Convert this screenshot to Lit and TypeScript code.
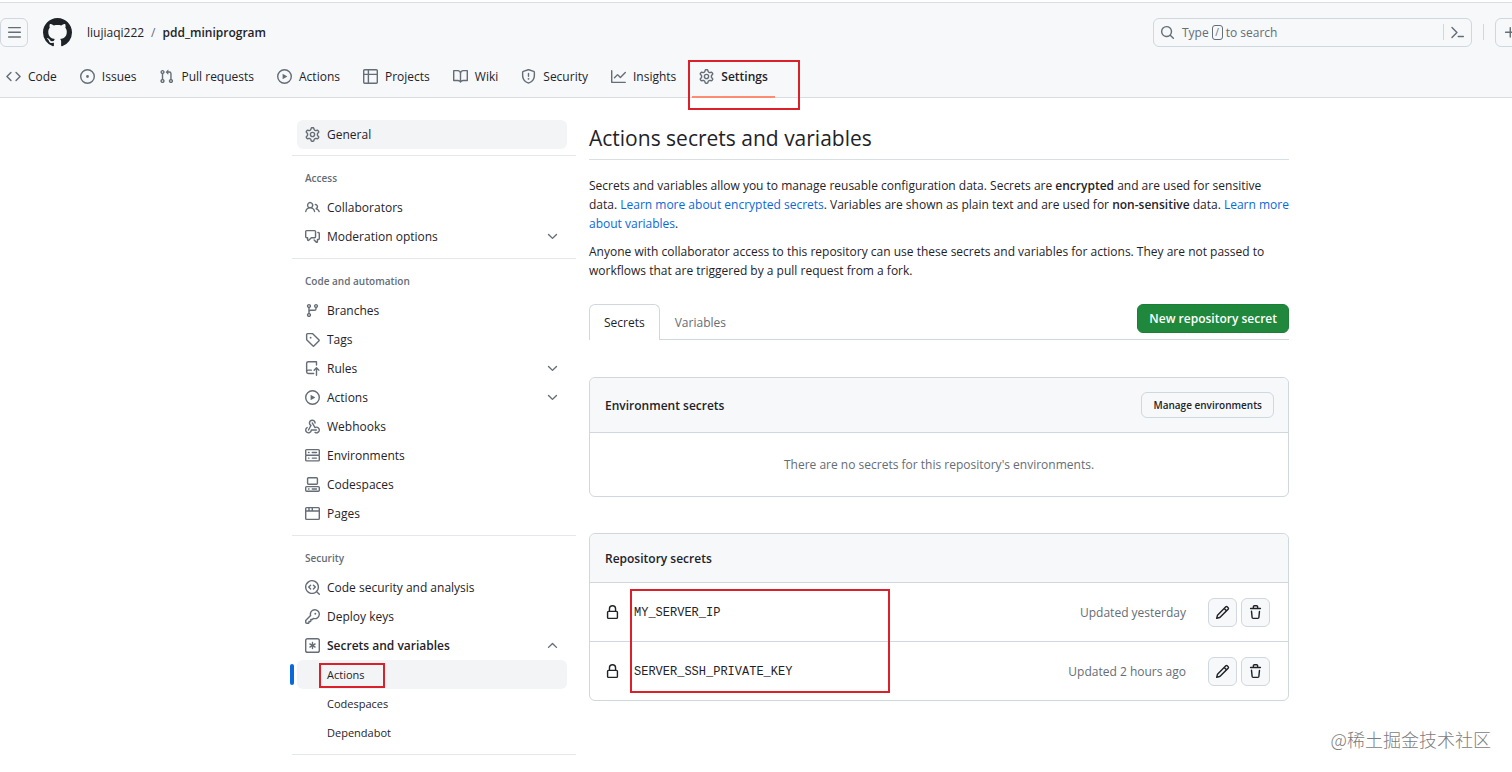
import { LitElement, html, css, svg, nothing } from "lit";
import { customElement, property } from "lit/decorators.js";
import { classMap } from "lit/directives/class-map.js";

const ICONS: Record<string, string> = {
  menu: "M1 2.75A.75.75 0 0 1 1.75 2h12.5a.75.75 0 0 1 0 1.5H1.75A.75.75 0 0 1 1 2.75Zm0 5A.75.75 0 0 1 1.75 7h12.5a.75.75 0 0 1 0 1.5H1.75A.75.75 0 0 1 1 7.75ZM1.75 12h12.5a.75.75 0 0 1 0 1.5H1.75a.75.75 0 0 1 0-1.5Z",
  github: "M8 0c4.42 0 8 3.58 8 8a8.013 8.013 0 0 1-5.45 7.59c-.4.08-.55-.17-.55-.38 0-.27.01-1.13.01-2.2 0-.75-.25-1.23-.54-1.48 1.78-.2 3.65-.88 3.65-3.95 0-.88-.31-1.59-.82-2.15.08-.2.36-1.02-.08-2.12 0 0-.67-.22-2.2.82-.64-.18-1.32-.27-2-.27-.68 0-1.36.09-2 .27-1.53-1.03-2.2-.82-2.2-.82-.44 1.1-.16 1.92-.08 2.12-.51.56-.82 1.28-.82 2.15 0 3.06 1.86 3.75 3.64 3.95-.23.2-.44.55-.51 1.07-.46.21-1.61.55-2.33-.66-.15-.24-.6-.83-1.23-.82-.67.01-.27.38.01.53.34.19.73.9.82 1.13.16.45.68 1.31 2.69.94 0 .67.01 1.3.01 1.49 0 .21-.15.45-.55.38A7.995 7.995 0 0 1 0 8c0-4.42 3.58-8 8-8Z",
  code: "m11.28 3.22 4.25 4.25a.75.75 0 0 1 0 1.06l-4.25 4.25a.749.749 0 0 1-1.275-.326.749.749 0 0 1 .215-.734L13.94 8l-3.72-3.72a.749.749 0 0 1 .326-1.275.749.749 0 0 1 .734.215Zm-6.56 0a.751.751 0 0 1 1.042.018.751.751 0 0 1 .018 1.042L2.06 8l3.72 3.72a.749.749 0 0 1-.326 1.275.749.749 0 0 1-.734-.215L.47 8.53a.75.75 0 0 1 0-1.06Z",
  issue: "M8 9.5a1.5 1.5 0 1 0 0-3 1.5 1.5 0 0 0 0 3ZM8 0a8 8 0 1 1 0 16A8 8 0 0 1 8 0ZM1.5 8a6.5 6.5 0 1 0 13 0 6.5 6.5 0 0 0-13 0Z",
  pull: "M1.5 3.25a2.25 2.25 0 1 1 3 2.122v5.256a2.251 2.251 0 1 1-1.5 0V5.372A2.25 2.25 0 0 1 1.5 3.25Zm5.677-.177L9.573.677A.25.25 0 0 1 10 .854V2.5h1A2.5 2.5 0 0 1 13.5 5v5.628a2.251 2.251 0 1 1-1.5 0V5a1 1 0 0 0-1-1h-1v1.646a.25.25 0 0 1-.427.177L7.177 3.427a.25.25 0 0 1 0-.354ZM3.75 2.5a.75.75 0 1 0 0 1.5.75.75 0 0 0 0-1.5Zm0 9.5a.75.75 0 1 0 0 1.5.75.75 0 0 0 0-1.5Zm8.25.75a.75.75 0 1 0 1.5 0 .75.75 0 0 0-1.5 0Z",
  play: "M8 0a8 8 0 1 1 0 16A8 8 0 0 1 8 0ZM1.5 8a6.5 6.5 0 1 0 13 0 6.5 6.5 0 0 0-13 0Zm4.879-2.773 4.264 2.559a.25.25 0 0 1 0 .428l-4.264 2.559A.25.25 0 0 1 6 10.559V5.442a.25.25 0 0 1 .379-.215Z",
  table: "M0 1.75C0 .784.784 0 1.75 0h12.5C15.216 0 16 .784 16 1.75v12.5A1.75 1.75 0 0 1 14.25 16H1.75A1.75 1.75 0 0 1 0 14.25ZM6.5 6.5v8h7.75a.25.25 0 0 0 .25-.25V6.5Zm8-1.5V1.75a.25.25 0 0 0-.25-.25H6.5V5Zm-13 1.5v7.75c0 .138.112.25.25.25H5v-8ZM5 5V1.5H1.75a.25.25 0 0 0-.25.25V5Z",
  book: "M0 1.75A.75.75 0 0 1 .75 1h4.253c1.227 0 2.317.59 3 1.501A3.743 3.743 0 0 1 11.006 1h4.245a.75.75 0 0 1 .75.75v10.5a.75.75 0 0 1-.75.75h-4.507a2.25 2.25 0 0 0-1.591.659l-.622.621a.75.75 0 0 1-1.06 0l-.622-.621A2.25 2.25 0 0 0 5.258 13H.75a.75.75 0 0 1-.75-.75Zm7.251 10.324.004-5.073-.002-2.253A2.25 2.25 0 0 0 5.003 2.5H1.5v9h3.757a3.75 3.75 0 0 1 1.994.574ZM8.755 4.75l-.004 7.322a3.752 3.752 0 0 1 1.992-.572H14.5v-9h-3.495a2.25 2.25 0 0 0-2.25 2.25Z",
  shield: "M8.533.133a1.75 1.75 0 0 0-1.066 0l-5.25 1.68A1.75 1.75 0 0 0 1 3.48V7c0 1.566.32 3.182 1.303 4.682.983 1.498 2.585 2.813 5.032 3.855a1.697 1.697 0 0 0 1.33 0c2.447-1.042 4.049-2.357 5.032-3.855C14.68 10.182 15 8.566 15 7V3.48a1.75 1.75 0 0 0-1.217-1.667Zm-.61 1.429a.25.25 0 0 1 .153 0l5.25 1.68a.25.25 0 0 1 .174.238V7c0 1.358-.275 2.666-1.057 3.86-.784 1.194-2.121 2.34-4.366 3.297a.196.196 0 0 1-.154 0c-2.245-.956-3.582-2.104-4.366-3.298C2.775 9.666 2.5 8.36 2.5 7V3.48a.25.25 0 0 1 .174-.237ZM8.75 4.75a.75.75 0 0 0-1.5 0v3a.75.75 0 0 0 1.5 0ZM9 10.5a1 1 0 1 1-2 0 1 1 0 0 1 2 0Z",
  graph: "M1.5 1.75V13.5h13.75a.75.75 0 0 1 0 1.5H.75a.75.75 0 0 1-.75-.75V1.75a.75.75 0 0 1 1.5 0Zm14.28 2.53-5.25 5.25a.75.75 0 0 1-1.06 0L7 7.06 4.28 9.78a.751.751 0 0 1-1.042-.018.751.751 0 0 1-.018-1.042l3.25-3.25a.75.75 0 0 1 1.06 0L10 7.94l4.72-4.72a.751.751 0 0 1 1.042.018.751.751 0 0 1 .018 1.042Z",
  gear: "M8 0a8.2 8.2 0 0 1 .701.031C9.444.095 9.99.645 10.16 1.29l.288 1.107c.018.066.079.158.212.224.231.114.454.243.668.386.123.082.233.09.299.071l1.103-.303c.644-.176 1.392.021 1.82.63.27.385.506.792.704 1.218.315.675.111 1.422-.364 1.891l-.814.806c-.049.048-.098.147-.088.294.016.257.016.515 0 .772-.01.147.038.246.088.294l.814.806c.475.469.679 1.216.364 1.891a7.977 7.977 0 0 1-.704 1.217c-.428.61-1.176.807-1.82.63l-1.102-.302c-.067-.019-.177-.011-.3.071a5.909 5.909 0 0 1-.668.386c-.133.066-.194.158-.211.224l-.29 1.106c-.168.646-.715 1.196-1.458 1.26a8.006 8.006 0 0 1-1.402 0c-.743-.064-1.289-.614-1.458-1.26l-.289-1.106c-.018-.066-.079-.158-.212-.224a5.738 5.738 0 0 1-.668-.386c-.123-.082-.233-.09-.299-.071l-1.103.303c-.644.176-1.392-.021-1.82-.63a8.12 8.12 0 0 1-.704-1.218c-.315-.675-.111-1.422.363-1.891l.815-.806c.05-.048.098-.147.088-.294a6.214 6.214 0 0 1 0-.772c.01-.147-.038-.246-.088-.294l-.815-.806C.635 6.045.431 5.298.746 4.623a7.92 7.92 0 0 1 .704-1.217c.428-.61 1.176-.807 1.82-.63l1.102.302c.067.019.177.011.3-.071.214-.143.437-.272.668-.386.133-.066.194-.158.211-.224l.29-1.106C6.009.645 6.556.095 7.299.03 7.53.01 7.764 0 8 0Zm-.571 1.525c-.036.003-.108.036-.137.146l-.289 1.105c-.147.561-.549.967-.998 1.189-.173.086-.34.183-.5.29-.417.278-.97.423-1.529.27l-1.103-.303c-.109-.03-.175.016-.195.045-.22.312-.412.644-.573.99-.014.031-.021.11.059.19l.815.806c.411.406.562.957.53 1.456a4.709 4.709 0 0 0 0 .582c.032.499-.119 1.05-.53 1.456l-.815.806c-.081.08-.073.159-.059.19.162.346.353.677.573.989.02.03.085.076.195.046l1.102-.303c.56-.153 1.113-.008 1.53.27.161.107.328.204.501.29.447.222.85.629.997 1.189l.289 1.105c.029.109.101.143.137.146a6.6 6.6 0 0 0 1.142 0c.036-.003.108-.036.137-.146l.289-1.105c.147-.561.549-.967.998-1.189.173-.086.34-.183.5-.29.417-.278.97-.423 1.529-.27l1.103.303c.109.029.175-.016.195-.045.22-.313.411-.644.573-.99.014-.031.021-.11-.059-.19l-.815-.806c-.411-.406-.562-.957-.53-1.456a4.709 4.709 0 0 0 0-.582c-.032-.499.119-1.05.53-1.456l.815-.806c.081-.08.073-.159.059-.19a6.464 6.464 0 0 0-.573-.989c-.02-.03-.085-.076-.195-.046l-1.102.303c-.56.153-1.113.008-1.53-.27a4.44 4.44 0 0 0-.501-.29c-.447-.222-.85-.629-.997-1.189l-.289-1.105c-.029-.11-.101-.143-.137-.146a6.6 6.6 0 0 0-1.142 0ZM11 8a3 3 0 1 1-6 0 3 3 0 0 1 6 0ZM9.5 8a1.5 1.5 0 1 0-3.001.001A1.5 1.5 0 0 0 9.5 8Z",
  search: "M10.68 11.74a6 6 0 0 1-7.922-8.982 6 6 0 0 1 8.982 7.922l3.04 3.04a.749.749 0 0 1-.326 1.275.749.749 0 0 1-.734-.215ZM11.5 7a4.499 4.499 0 1 0-8.997 0A4.499 4.499 0 0 0 11.5 7Z",
  people: "M2 5.5a3.5 3.5 0 1 1 5.898 2.549 5.508 5.508 0 0 1 3.034 4.084.75.75 0 1 1-1.482.235 4 4 0 0 0-7.9 0 .75.75 0 0 1-1.482-.236A5.507 5.507 0 0 1 3.102 8.05 3.493 3.493 0 0 1 2 5.5ZM11 4a3.001 3.001 0 0 1 2.22 5.018 5.01 5.01 0 0 1 2.56 3.012.749.749 0 0 1-.885.954.752.752 0 0 1-.549-.514 3.507 3.507 0 0 0-2.522-2.372.75.75 0 0 1-.574-.73v-.352a.75.75 0 0 1 .416-.672A1.5 1.5 0 0 0 11 5.5.75.75 0 0 1 11 4Zm-5.5-.5a2 2 0 1 0-.001 3.999A2 2 0 0 0 5.5 3.5Z",
  discussion: "M1.75 1h8.5c.966 0 1.75.784 1.75 1.75v5.5A1.75 1.75 0 0 1 10.25 10H7.061l-2.574 2.573A1.458 1.458 0 0 1 2 11.543V10h-.25A1.75 1.75 0 0 1 0 8.25v-5.5C0 1.784.784 1 1.75 1ZM1.5 2.75v5.5c0 .138.112.25.25.25h1a.75.75 0 0 1 .75.75v2.19l2.72-2.72a.749.749 0 0 1 .53-.22h3.5a.25.25 0 0 0 .25-.25v-5.5a.25.25 0 0 0-.25-.25h-8.5a.25.25 0 0 0-.25.25Zm13 2a.25.25 0 0 0-.25-.25h-.5a.75.75 0 0 1 0-1.5h.5c.966 0 1.75.784 1.75 1.75v5.5A1.75 1.75 0 0 1 14.25 12H14v1.543a1.458 1.458 0 0 1-2.487 1.03L9.22 12.28a.749.749 0 0 1 .326-1.275.749.749 0 0 1 .734.215l2.22 2.22v-2.19a.75.75 0 0 1 .75-.75h1a.25.25 0 0 0 .25-.25Z",
  down: "M12.78 5.22a.749.749 0 0 1 0 1.06l-4.25 4.25a.749.749 0 0 1-1.06 0L3.22 6.28a.749.749 0 1 1 1.06-1.06L8 8.939l3.72-3.719a.749.749 0 0 1 1.06 0Z",
  up: "M3.22 10.53a.749.749 0 0 1 0-1.06l4.25-4.25a.749.749 0 0 1 1.06 0l4.25 4.25a.749.749 0 1 1-1.06 1.06L8 6.811 4.28 10.53a.749.749 0 0 1-1.06 0Z",
  branch: "M9.5 3.25a2.25 2.25 0 1 1 3 2.122V6A2.5 2.5 0 0 1 10 8.5H6a1 1 0 0 0-1 1v1.128a2.251 2.251 0 1 1-1.5 0V5.372a2.25 2.25 0 1 1 1.5 0v1.836A2.493 2.493 0 0 1 6 7h4a1 1 0 0 0 1-1v-.628A2.25 2.25 0 0 1 9.5 3.25Zm-6 0a.75.75 0 1 0 1.5 0 .75.75 0 0 0-1.5 0Zm8.25-.75a.75.75 0 1 0 0 1.5.75.75 0 0 0 0-1.5ZM4.25 12a.75.75 0 1 0 0 1.5.75.75 0 0 0 0-1.5Z",
  tag: "M1 7.775V2.75C1 1.784 1.784 1 2.75 1h5.025c.464 0 .91.184 1.238.513l6.25 6.25a1.75 1.75 0 0 1 0 2.474l-5.026 5.026a1.75 1.75 0 0 1-2.474 0l-6.25-6.25A1.752 1.752 0 0 1 1 7.775Zm1.5 0c0 .066.026.13.073.177l6.25 6.25a.25.25 0 0 0 .354 0l5.025-5.025a.25.25 0 0 0 0-.354l-6.25-6.25a.25.25 0 0 0-.177-.073H2.75a.25.25 0 0 0-.25.25ZM6 5a1 1 0 1 1 0 2 1 1 0 0 1 0-2Z",
  rules: "M1 2.5A2.5 2.5 0 0 1 3.5 0h8.75a.75.75 0 0 1 .75.75v3.5a.75.75 0 0 1-1.5 0V1.5h-8a1 1 0 0 0-1 1v6.708A2.493 2.493 0 0 1 3.5 9h3.25a.75.75 0 0 1 0 1.5H3.5a1 1 0 0 0 0 2h5.75a.75.75 0 0 1 0 1.5H3.5A2.5 2.5 0 0 1 1 11.5Zm13.23 7.79h-.001l-1.224-1.224v6.184a.75.75 0 0 1-1.5 0V9.066L10.28 10.29a.75.75 0 0 1-1.06-1.061l2.505-2.504a.75.75 0 0 1 1.06 0L15.29 9.23a.751.751 0 0 1-.018 1.042.751.751 0 0 1-1.042.018Z",
  webhook: "M5.5 4.25a2.25 2.25 0 0 1 4.5 0 .75.75 0 0 0 1.5 0 3.75 3.75 0 1 0-6.14 2.889l-2.272 4.258a.75.75 0 0 0 1.324.706L7 7.25a.75.75 0 0 0-.309-1.015A2.25 2.25 0 0 1 5.5 4.25ZM7.364 3.607a.75.75 0 0 1 1.03.257l2.608 4.349a3.75 3.75 0 1 1-.628 6.785.75.75 0 0 1 .752-1.299 2.25 2.25 0 1 0-.033-3.88.75.75 0 0 1-1.03-.256L7.107 4.636a.75.75 0 0 1 .257-1.03ZM2.9 8.776A.75.75 0 0 1 2.625 9.8 2.25 2.25 0 1 0 6 11.75a.75.75 0 0 1 .75-.751h5.5a.75.75 0 0 1 0 1.5H7.425a3.751 3.751 0 1 1-5.55-3.998.75.75 0 0 1 1.024.274Z",
  server: "M1.75 1h12.5c.966 0 1.75.784 1.75 1.75v4c0 .372-.116.717-.314 1 .198.283.314.628.314 1v4a1.75 1.75 0 0 1-1.75 1.75H1.75A1.75 1.75 0 0 1 0 12.75v-4c0-.358.109-.707.314-1a1.739 1.739 0 0 1-.314-1v-4C0 1.784.784 1 1.75 1ZM1.5 2.75v4c0 .138.112.25.25.25h12.5a.25.25 0 0 0 .25-.25v-4a.25.25 0 0 0-.25-.25H1.75a.25.25 0 0 0-.25.25Zm.25 5.75a.25.25 0 0 0-.25.25v4c0 .138.112.25.25.25h12.5a.25.25 0 0 0 .25-.25v-4a.25.25 0 0 0-.25-.25ZM7 4.75A.75.75 0 0 1 7.75 4h4.5a.75.75 0 0 1 0 1.5h-4.5A.75.75 0 0 1 7 4.75ZM7.75 10h4.5a.75.75 0 0 1 0 1.5h-4.5a.75.75 0 0 1 0-1.5ZM3 4.75A.75.75 0 0 1 3.75 4h.5a.75.75 0 0 1 0 1.5h-.5A.75.75 0 0 1 3 4.75ZM3.75 10h.5a.75.75 0 0 1 0 1.5h-.5a.75.75 0 0 1 0-1.5Z",
  codespaces: "M0 11.25c0-.966.784-1.75 1.75-1.75h12.5c.966 0 1.75.784 1.75 1.75v3A1.75 1.75 0 0 1 14.25 16H1.75A1.75 1.75 0 0 1 0 14.25Zm2-9.5C2 .784 2.784 0 3.75 0h8.5C13.216 0 14 .784 14 1.75v5a1.75 1.75 0 0 1-1.75 1.75h-8.5A1.75 1.75 0 0 1 2 6.75Zm1.75-.25a.25.25 0 0 0-.25.25v5c0 .138.112.25.25.25h8.5a.25.25 0 0 0 .25-.25v-5a.25.25 0 0 0-.25-.25Zm-2 9.5a.25.25 0 0 0-.25.25v3c0 .138.112.25.25.25h12.5a.25.25 0 0 0 .25-.25v-3a.25.25 0 0 0-.25-.25ZM7 12.75a.75.75 0 0 1 .75-.75h4.5a.75.75 0 0 1 0 1.5h-4.5a.75.75 0 0 1-.75-.75Zm-4 0a.75.75 0 0 1 .75-.75h.5a.75.75 0 0 1 0 1.5h-.5a.75.75 0 0 1-.75-.75Z",
  browser: "M0 2.75C0 1.784.784 1 1.75 1h12.5c.966 0 1.75.784 1.75 1.75v10.5A1.75 1.75 0 0 1 14.25 15H1.75A1.75 1.75 0 0 1 0 13.25ZM14.5 6h-13v7.25c0 .138.112.25.25.25h12.5a.25.25 0 0 0 .25-.25Zm-6-3.5v2h6V2.75a.25.25 0 0 0-.25-.25ZM5 2.5v2h2v-2Zm-3.25 0a.25.25 0 0 0-.25.25V4.5h2v-2Z",
  codescan: "M8.47 4.97a.75.75 0 0 0 0 1.06L9.94 7.5 8.47 8.97a.75.75 0 1 0 1.06 1.06l2-2a.75.75 0 0 0 0-1.06l-2-2a.75.75 0 0 0-1.06 0ZM6.53 6.03a.75.75 0 0 0-1.06-1.06l-2 2a.75.75 0 0 0 0 1.06l2 2a.75.75 0 1 0 1.06-1.06L5.06 7.5l1.47-1.47ZM12.246 13.307a7.501 7.501 0 1 1 1.06-1.06l2.474 2.473a.749.749 0 0 1-.326 1.275.749.749 0 0 1-.734-.215ZM1.5 7.5a6.002 6.002 0 0 0 3.608 5.504 6.002 6.002 0 0 0 6.486-1.117.748.748 0 0 1 .292-.293A6 6 0 1 0 1.5 7.5Z",
  key: "M10.5 0a5.499 5.499 0 1 1-1.288 10.848l-.932.932a.749.749 0 0 1-.53.22H7v.75a.749.749 0 0 1-.22.53l-.5.5a.749.749 0 0 1-.53.22H5v.75a.749.749 0 0 1-.22.53l-.5.5a.749.749 0 0 1-.53.22h-2A1.75 1.75 0 0 1 0 14.25v-2c0-.199.079-.389.22-.53l4.932-4.932A5.5 5.5 0 0 1 10.5 0Zm-4 5.5c-.001.431.069.86.205 1.269a.75.75 0 0 1-.181.768L1.5 12.56v1.69c0 .138.112.25.25.25h1.69l.06-.06v-1.19a.75.75 0 0 1 .75-.75h1.19l.06-.06v-1.19a.75.75 0 0 1 .75-.75h1.19l1.023-1.025a.75.75 0 0 1 .768-.18A4 4 0 1 0 6.5 5.5ZM11 6a1 1 0 1 1 0-2 1 1 0 0 1 0 2Z",
  asterisk: "M0 2.75A2.75 2.75 0 0 1 2.75 0h10.5A2.75 2.75 0 0 1 16 2.75v10.5A2.75 2.75 0 0 1 13.25 16H2.75A2.75 2.75 0 0 1 0 13.25ZM2.75 1.5c-.69 0-1.25.56-1.25 1.25v10.5c0 .69.56 1.25 1.25 1.25h10.5c.69 0 1.25-.56 1.25-1.25V2.75c0-.69-.56-1.25-1.25-1.25ZM8 4a.75.75 0 0 1 .75.75V6.7l1.69-.975a.75.75 0 0 1 .75 1.3L9.5 8l1.69.976a.75.75 0 0 1-.75 1.298L8.75 9.3v1.951a.75.75 0 0 1-1.5 0V9.299l-1.69.976a.75.75 0 0 1-.75-1.3L6.5 8l-1.69-.975a.75.75 0 0 1 .75-1.3l1.69.976V4.75A.75.75 0 0 1 8 4Z",
  lock: "M4 4a4 4 0 0 1 8 0v2h.25c.966 0 1.75.784 1.75 1.75v5.5A1.75 1.75 0 0 1 12.25 15h-8.5A1.75 1.75 0 0 1 2 13.25v-5.5C2 6.784 2.784 6 3.75 6H4Zm8.25 3.5h-8.5a.25.25 0 0 0-.25.25v5.5c0 .138.112.25.25.25h8.5a.25.25 0 0 0 .25-.25v-5.5a.25.25 0 0 0-.25-.25ZM10.5 6V4a2.5 2.5 0 1 0-5 0v2Z",
  pencil: "M11.013 1.427a1.75 1.75 0 0 1 2.474 0l1.086 1.086a1.75 1.75 0 0 1 0 2.474l-8.61 8.61c-.21.21-.47.364-.756.445l-3.251.93a.75.75 0 0 1-.927-.928l.929-3.25c.081-.286.235-.547.445-.758l8.61-8.61Zm.176 4.823L9.75 4.81l-6.286 6.287a.253.253 0 0 0-.064.108l-.558 1.953 1.953-.558a.253.253 0 0 0 .108-.064Zm1.238-3.763a.25.25 0 0 0-.354 0L10.811 3.75l1.439 1.44 1.263-1.263a.25.25 0 0 0 0-.354Z",
  trash: "M11 1.75V3h2.25a.75.75 0 0 1 0 1.5H2.75a.75.75 0 0 1 0-1.5H5V1.75C5 .784 5.784 0 6.75 0h2.5C10.216 0 11 .784 11 1.75ZM4.496 6.675l.66 6.6a.25.25 0 0 0 .249.225h5.19a.25.25 0 0 0 .249-.225l.66-6.6a.75.75 0 0 1 1.492.149l-.66 6.6A1.748 1.748 0 0 1 10.595 15h-5.19a1.75 1.75 0 0 1-1.741-1.575l-.66-6.6a.75.75 0 1 1 1.492-.15ZM6.5 1.75V3h3V1.75a.25.25 0 0 0-.25-.25h-2.5a.25.25 0 0 0-.25.25Z",
  palette: "m6.354 8.04-4.773 4.773a.75.75 0 1 0 1.061 1.06L7.945 8.57a.75.75 0 0 0 0-1.06L2.642 2.206a.75.75 0 0 0-1.06 1.061L6.353 8.04ZM8.75 11.5a.75.75 0 0 0 0 1.5h5.5a.75.75 0 0 0 0-1.5h-5.5Z",
  plus: "M7.75 2a.75.75 0 0 1 .75.75V7h4.25a.75.75 0 0 1 0 1.5H8.5v4.25a.75.75 0 0 1-1.5 0V8.5H2.75a.75.75 0 0 1 0-1.5H7V2.75A.75.75 0 0 1 7.75 2Z",
};

@customElement("oct-icon")
class OctIcon extends LitElement {
  @property() name = "";

  static styles = css`
    :host {
      display: inline-flex;
      flex: none;
      width: 15px;
      height: 15px;
    }
    .glyph {
      width: 100%;
      height: 100%;
      fill: currentColor;
    }
  `;

  render() {
    return html`<svg class="glyph" viewBox="0 0 16 16" aria-hidden="true">
      ${svg`<path d=${ICONS[this.name] ?? ""}></path>`}
    </svg>`;
  }
}

interface NavItem {
  icon: string;
  label: string;
  chevron?: "down" | "up";
  open?: boolean;
  children?: string[];
}

const TABS: NavItem[] = [
  { icon: "code", label: "Code" },
  { icon: "issue", label: "Issues" },
  { icon: "pull", label: "Pull requests" },
  { icon: "play", label: "Actions" },
  { icon: "table", label: "Projects" },
  { icon: "book", label: "Wiki" },
  { icon: "shield", label: "Security" },
  { icon: "graph", label: "Insights" },
  { icon: "gear", label: "Settings" },
];

const SECTIONS: { title: string; items: NavItem[] }[] = [
  {
    title: "Access",
    items: [
      { icon: "people", label: "Collaborators" },
      { icon: "discussion", label: "Moderation options", chevron: "down" },
    ],
  },
  {
    title: "Code and automation",
    items: [
      { icon: "branch", label: "Branches" },
      { icon: "tag", label: "Tags" },
      { icon: "rules", label: "Rules", chevron: "down" },
      { icon: "play", label: "Actions", chevron: "down" },
      { icon: "webhook", label: "Webhooks" },
      { icon: "server", label: "Environments" },
      { icon: "codespaces", label: "Codespaces" },
      { icon: "browser", label: "Pages" },
    ],
  },
  {
    title: "Security",
    items: [
      { icon: "codescan", label: "Code security and analysis" },
      { icon: "key", label: "Deploy keys" },
      {
        icon: "asterisk",
        label: "Secrets and variables",
        chevron: "up",
        open: true,
        children: ["Actions", "Codespaces", "Dependabot"],
      },
    ],
  },
];

const SECRETS = [
  { name: "MY_SERVER_IP", updated: "Updated yesterday" },
  { name: "SERVER_SSH_PRIVATE_KEY", updated: "Updated 2 hours ago" },
];

const base = css`
  * {
    box-sizing: border-box;
  }
  a {
    color: inherit;
    text-decoration: none;
  }
  button {
    font: inherit;
    color: inherit;
    padding: 0;
    margin: 0;
    border: 0;
    background: none;
    cursor: pointer;
  }
  ul {
    list-style: none;
    margin: 0;
    padding: 0;
  }
  .mark {
    position: absolute;
    border: 2px solid #dc2029;
    pointer-events: none;
  }
`;

@customElement("repo-header")
class RepoHeader extends LitElement {
  static styles = [
    base,
    css`
      :host {
        display: block;
        background: #f6f8fa;
        border-top: 1px solid #d8dee4;
        border-bottom: 1px solid #d8dee4;
      }
      .bar {
        display: flex;
        align-items: center;
        height: 58px;
        overflow: hidden;
      }
      .square {
        display: flex;
        align-items: center;
        justify-content: center;
        width: 28px;
        height: 29px;
        border: 1px solid #d0d7de;
        border-radius: 6px;
        color: #656d76;
      }
      .logo {
        display: flex;
        margin: 0 15px;
        color: #1f2328;
      }
      .logo oct-icon {
        width: 29px;
        height: 29px;
      }
      .crumbs {
        display: flex;
        gap: 7px;
        flex: 1;
        padding-top: 2px;
      }
      .slash {
        color: #656d76;
      }
      .repo {
        font-weight: 600;
      }
      .search {
        display: flex;
        align-items: center;
        width: 319px;
        height: 29px;
        border: 1px solid #d0d7de;
        border-radius: 6px;
        color: #656d76;
      }
      .query {
        display: flex;
        align-items: center;
        gap: 7px;
        flex: 1;
        height: 100%;
        padding-left: 6px;
      }
      .words {
        display: flex;
        align-items: center;
        gap: 3px;
        padding-top: 1px;
      }
      .words kbd {
        width: 11px;
        height: 15px;
        border: 1px solid #656d76;
        border-radius: 3px;
        font: inherit;
        font-size: 10px;
        line-height: 13px;
        text-align: center;
      }
      .palette {
        display: flex;
        align-items: center;
        justify-content: center;
        width: 28px;
        height: 16px;
        border-left: 1px solid #d0d7de;
      }
      .rule {
        width: 1px;
        height: 16px;
        margin: 0 11px;
        background: #d0d7de;
      }
      .add {
        width: 40px;
        justify-content: flex-start;
        padding-left: 7px;
        margin-right: -23px;
      }
      .tabs {
        display: flex;
        gap: 9px;
        height: 36px;
      }
      .tab {
        display: flex;
        position: relative;
        gap: 7px;
        height: 37px;
        padding: 0 7px 6px;
        align-items: center;
        color: #1f2328;
      }
      .tab oct-icon {
        color: #656d76;
      }
      .tab:first-child {
        padding-left: 6px;
      }
      .current {
        border-bottom: 2px solid #fd8c73;
        padding-bottom: 4px;
        font-weight: 600;
      }
      .current .mark {
        left: -4px;
        top: -1px;
        width: 112px;
        height: 50px;
      }
    `,
  ];

  render() {
    return html`
      <div class="bar">
        <button class="square" aria-label="Open menu"><oct-icon name="menu"></oct-icon></button>
        <a class="logo" href="#" aria-label="Homepage"><oct-icon name="github"></oct-icon></a>
        <nav class="crumbs" aria-label="Breadcrumb">
          <a href="#">liujiaqi222</a><span class="slash">/</span><a class="repo" href="#">pdd_miniprogram</a>
        </nav>
        <div class="search">
          <button class="query">
            <oct-icon name="search"></oct-icon>
            <span class="words">Type <kbd>/</kbd> to search</span>
          </button>
          <button class="palette" aria-label="Command palette"><oct-icon name="palette"></oct-icon></button>
        </div>
        <span class="rule"></span>
        <button class="square add" aria-label="Create new"><oct-icon name="plus"></oct-icon></button>
      </div>
      <nav class="tabs" aria-label="Repository">
        ${TABS.map((t) => {
          const current = t.label === "Settings";
          return html`<a class=${classMap({ tab: true, current })} href="#">
            <oct-icon name=${t.icon}></oct-icon><span>${t.label}</span>
            ${current ? html`<span class="mark"></span>` : nothing}
          </a>`;
        })}
      </nav>
    `;
  }
}

@customElement("settings-menu")
class SettingsMenu extends LitElement {
  static styles = [
    base,
    css`
      :host {
        display: block;
      }
      .group {
        padding: 8px 9px 7px 5px;
        border-bottom: 1px solid #e4e8ec;
      }
      .group:first-child {
        padding-top: 0;
        padding-bottom: 6px;
      }
      .title {
        margin: 0;
        padding-left: 8px;
        font-size: 10px;
        line-height: 29px;
        font-weight: 600;
        color: #656d76;
      }
      .item {
        display: flex;
        align-items: center;
        gap: 7px;
        width: 100%;
        height: 29px;
        padding: 0 7px 0 8px;
        border-radius: 6px;
        text-align: left;
      }
      .item oct-icon {
        color: #656d76;
      }
      .label {
        flex: 1;
      }
      .selected {
        background: #f3f4f6;
      }
      .open {
        font-weight: 600;
      }
      .sub {
        position: relative;
        padding-left: 30px;
        font-size: 11px;
      }
      .sub.selected::before {
        content: "";
        position: absolute;
        left: -7px;
        top: 4px;
        width: 4px;
        height: 21px;
        border-radius: 6px;
        background: #0969da;
      }
      .mark {
        left: 22px;
        top: 3px;
        width: 66px;
        height: 25px;
      }
    `,
  ];

  private row(item: NavItem) {
    const body = html`<oct-icon name=${item.icon}></oct-icon><span class="label">${item.label}</span>`;
    const entry = item.chevron
      ? html`<button class=${classMap({ item: true, open: !!item.open })} aria-expanded=${item.open ? "true" : "false"}>
          ${body}<oct-icon name=${item.chevron}></oct-icon>
        </button>`
      : html`<a class="item" href="#">${body}</a>`;
    return html`<li>
      ${entry}
      ${item.children
        ? html`<ul>
            ${item.children.map(
              (c, i) => html`<li>
                <a class=${classMap({ item: true, sub: true, selected: i === 0 })} href="#"
                  ><span class="label">${c}</span>${i === 0 ? html`<span class="mark"></span>` : nothing}</a
                >
              </li>`
            )}
          </ul>`
        : nothing}
    </li>`;
  }

  render() {
    return html`<nav aria-label="Settings">
      <div class="group">
        <a class="item selected" href="#"><oct-icon name="gear"></oct-icon><span class="label">General</span></a>
      </div>
      ${SECTIONS.map(
        (s) => html`<section class="group">
          <h2 class="title">${s.title}</h2>
          <ul>
            ${s.items.map((i) => this.row(i))}
          </ul>
        </section>`
      )}
    </nav>`;
  }
}

@customElement("secrets-page")
class SecretsPage extends LitElement {
  static styles = [
    base,
    css`
      :host {
        display: block;
      }
      .heading {
        margin: 0 0 16px;
        padding: 2px 0 5px;
        border-bottom: 1px solid #d8dee4;
        font-size: 21px;
        line-height: 32px;
        font-weight: 400;
      }
      .text {
        margin: 0 0 9px;
        line-height: 19px;
      }
      .text a {
        color: #0969da;
      }
      .text b {
        font-weight: 600;
      }
      .tabs {
        display: flex;
        align-items: flex-start;
        margin: 24px 0 37px;
        border-bottom: 1px solid #d0d7de;
      }
      .tab {
        height: 36px;
        margin-bottom: -1px;
        padding: 0 14px;
        border: 1px solid transparent;
        border-bottom: 0;
        color: #656d76;
      }
      .chosen {
        border-color: #d0d7de;
        border-radius: 6px 6px 0 0;
        background: #fff;
        color: #1f2328;
      }
      .primary {
        height: 29px;
        margin-left: auto;
        padding: 0 11px;
        border: 1px solid #1c7f37;
        border-radius: 6px;
        background: #1f883d;
        color: #fff;
        font-weight: 600;
      }
      .box {
        position: relative;
        margin-bottom: 36px;
        border: 1px solid #d0d7de;
        border-radius: 6px;
      }
      .head {
        display: flex;
        align-items: center;
        justify-content: space-between;
        padding: 14px 14px 14px 15px;
        border-bottom: 1px solid #d0d7de;
        border-radius: 6px 6px 0 0;
        background: #f6f8fa;
      }
      .head h3 {
        margin: 0;
        padding-top: 2px;
        font-size: 12px;
        line-height: 18px;
        font-weight: 600;
      }
      .small {
        height: 26px;
        padding: 0 11px;
        border: 1px solid #d0d7de;
        border-radius: 6px;
        background: #f6f8fa;
        font-size: 10px;
        font-weight: 600;
      }
      .empty {
        margin: 0;
        padding: 22px 15px;
        line-height: 19px;
        text-align: center;
        color: #656d76;
      }
      .secret {
        display: flex;
        align-items: center;
        height: 58px;
        padding: 0 18px 0 15px;
      }
      .secret + .secret {
        height: 59px;
        border-top: 1px solid #d0d7de;
      }
      .name,
      .when {
        padding-top: 2px;
      }
      .name {
        flex: 1;
        margin-left: 14px;
        font-family: "Liberation Mono", monospace;
        font-size: 12px;
      }
      .when {
        margin-right: 18px;
        color: #656d76;
      }
      .icon {
        display: flex;
        align-items: center;
        justify-content: center;
        width: 29px;
        height: 29px;
        margin-left: 4px;
        border: 1px solid #d0d7de;
        border-radius: 6px;
        background: #f6f8fa;
      }
      .mark {
        left: 40px;
        top: 55px;
        width: 260px;
        height: 104px;
      }
    `,
  ];

  render() {
    return html`
      <h1 class="heading">Actions secrets and variables</h1>
      <p class="text">
        Secrets and variables allow you to manage reusable configuration data. Secrets are <b>encrypted</b> and are used
        for sensitive data. <a href="#">Learn more about encrypted secrets</a>. Variables are shown as plain text and are
        used for <b>non-sensitive</b> data. <a href="#">Learn more about variables</a>.
      </p>
      <p class="text">
        Anyone with collaborator access to this repository can use these secrets and variables for actions. They are not
        passed to workflows that are triggered by a pull request from a fork.
      </p>
      <div class="tabs">
        <button class="tab chosen">Secrets</button>
        <button class="tab">Variables</button>
        <button class="primary">New repository secret</button>
      </div>
      <section class="box">
        <div class="head">
          <h3>Environment secrets</h3>
          <button class="small">Manage environments</button>
        </div>
        <p class="empty">There are no secrets for this repository's environments.</p>
      </section>
      <section class="box">
        <div class="head"><h3>Repository secrets</h3></div>
        <ul>
          ${SECRETS.map(
            (s) => html`<li class="secret">
              <oct-icon name="lock"></oct-icon>
              <span class="name">${s.name}</span>
              <span class="when">${s.updated}</span>
              <button class="icon" aria-label="Edit ${s.name}"><oct-icon name="pencil"></oct-icon></button>
              <button class="icon" aria-label="Delete ${s.name}"><oct-icon name="trash"></oct-icon></button>
            </li>`
          )}
        </ul>
        <span class="mark"></span>
      </section>
    `;
  }
}

@customElement("app-root")
class AppRoot extends LitElement {
  static styles = css`
    :host {
      display: block;
      position: relative;
      min-height: 100vh;
      box-sizing: border-box;
      padding-top: 2px;
      background: #fff;
      color: #1f2328;
      font-family: "Open Sans", "Noto Sans", "Noto Sans CJK SC", sans-serif;
      font-size: 12px;
      line-height: 18px;
    }
    .layout {
      display: grid;
      grid-template-columns: 284px minmax(0, 1fr);
      gap: 13px;
      padding: 22px 223px 0 292px;
    }
    .stamp {
      position: absolute;
      right: 21px;
      bottom: 20px;
      font-family: "Noto Sans CJK SC", sans-serif;
      font-size: 18px;
      line-height: 26px;
      font-weight: 300;
      color: #7c7c7c;
    }
  `;

  render() {
    return html`
      <repo-header></repo-header>
      <div class="layout">
        <settings-menu></settings-menu>
        <main><secrets-page></secrets-page></main>
      </div>
      <span class="stamp">@稀土掘金技术社区</span>
    `;
  }
}
